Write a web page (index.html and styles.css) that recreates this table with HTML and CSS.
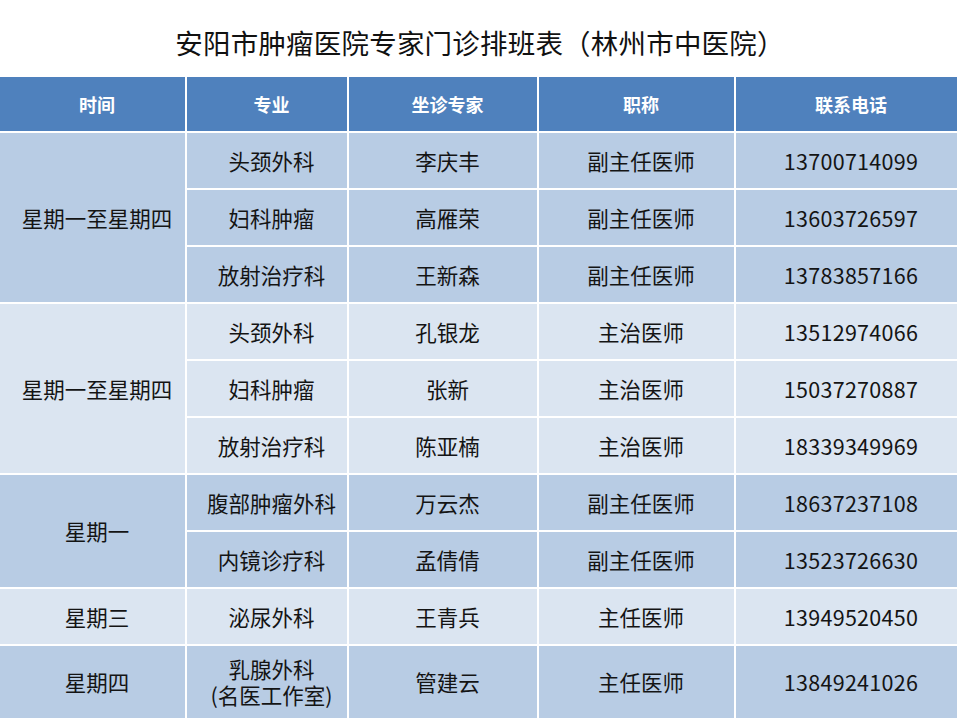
FILE: index.html
```html
<!DOCTYPE html>
<html lang="zh-CN">
<head>
<meta charset="utf-8">
<link rel="stylesheet" href="styles.css">
</head>
<body>
<div class="title">安阳市肿瘤医院专家门诊排班表（林州市中医院）</div>
<table class="sched">
  <colgroup>
    <col class="c1"><col class="c2"><col class="c3"><col class="c4"><col class="c5">
  </colgroup>
  <thead>
    <tr class="head"><th>时间</th><th>专业</th><th>坐诊专家</th><th>职称</th><th>联系电话</th></tr>
  </thead>
  <tbody>
    <tr class="dark"><td rowspan="3">星期一至星期四</td><td>头颈外科</td><td>李庆丰</td><td>副主任医师</td><td class="num">13700714099</td></tr>
    <tr class="dark"><td>妇科肿瘤</td><td>高雁荣</td><td>副主任医师</td><td class="num">13603726597</td></tr>
    <tr class="dark"><td>放射治疗科</td><td>王新森</td><td>副主任医师</td><td class="num">13783857166</td></tr>
    <tr class="light"><td rowspan="3">星期一至星期四</td><td>头颈外科</td><td>孔银龙</td><td>主治医师</td><td class="num">13512974066</td></tr>
    <tr class="light"><td>妇科肿瘤</td><td>张新</td><td>主治医师</td><td class="num">15037270887</td></tr>
    <tr class="light"><td>放射治疗科</td><td>陈亚楠</td><td>主治医师</td><td class="num">18339349969</td></tr>
    <tr class="dark"><td rowspan="2">星期一</td><td>腹部肿瘤外科</td><td>万云杰</td><td>副主任医师</td><td class="num">18637237108</td></tr>
    <tr class="dark"><td>内镜诊疗科</td><td>孟倩倩</td><td>副主任医师</td><td class="num">13523726630</td></tr>
    <tr class="light"><td>星期三</td><td>泌尿外科</td><td>王青兵</td><td>主任医师</td><td class="num">13949520450</td></tr>
    <tr class="dark tall"><td>星期四</td><td class="two"><span class="ln">乳腺外科</span><span class="ln">(名医工作室)</span></td><td>管建云</td><td>主任医师</td><td class="num">13849241026</td></tr>
  </tbody>
</table>
</body>
</html>
```
FILE: styles.css
```css
html, body {
  margin: 0;
  padding: 0;
  background: #ffffff;
}
body {
  width: 960px;
  height: 720px;
  overflow: hidden;
  font-family: "Noto Sans CJK SC", "Noto Sans", sans-serif;
  color: #141414;
}
.title {
  height: 77px;
  display: flex;
  align-items: center;
  justify-content: center;
  padding-top: 6px;
  box-sizing: border-box;
  font-size: 27.5px;
  color: #111;
  letter-spacing: 0.2px;
}
.sched {
  width: 958px;
  border-collapse: collapse;
  table-layout: fixed;
}
.c1 { width: 186px; }
.c2 { width: 162px; }
.c3 { width: 190px; }
.c4 { width: 197px; }
.c5 { width: 223px; }
.sched th, .sched td {
  border: 2px solid #ffffff;
  text-align: center;
  vertical-align: middle;
  padding: 0 0 0 9px;
}
.sched tr > :first-child { border-left: none; }
.sched thead th { border-top: none; }
.head th {
  background: #4f81bd;
  color: #ffffff;
  font-weight: bold;
  font-size: 18px;
  height: 54px;
}
.sched td {
  font-size: 21.5px;
  height: 55px;
  line-height: 1.2;
}
.dark td { background: #b8cce4; }
.light td { background: #dbe5f1; }
.tall td { height: 72px; }
.two .ln {
  display: block;
  line-height: 26px;
}
.num { font-size: 22px; letter-spacing: 0.3px; }
```
